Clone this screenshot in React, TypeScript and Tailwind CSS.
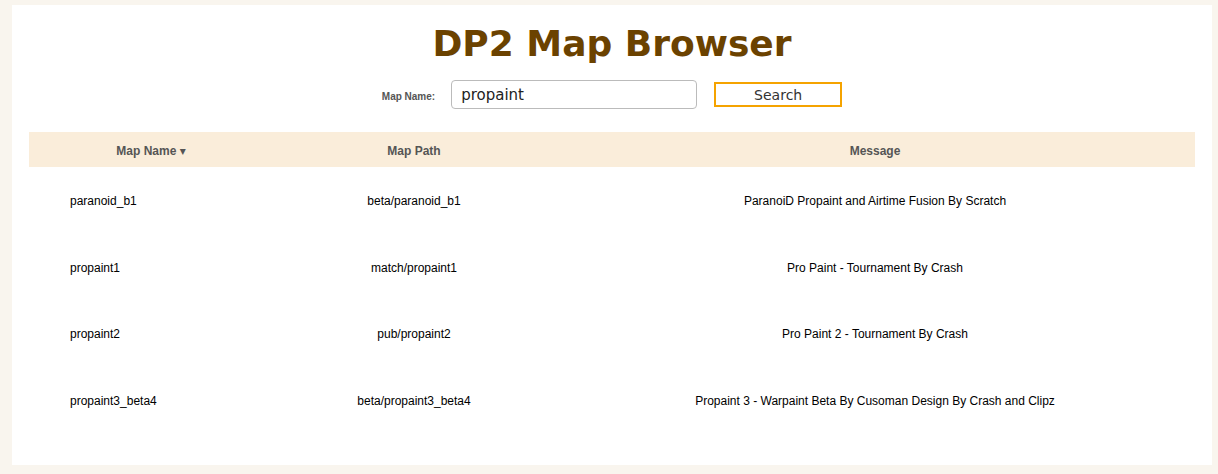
import React from "react";

const rows = [
  { name: "paranoid_b1", path: "beta/paranoid_b1", message: "ParanoiD Propaint and Airtime Fusion By Scratch" },
  { name: "propaint1", path: "match/propaint1", message: "Pro Paint - Tournament By Crash" },
  { name: "propaint2", path: "pub/propaint2", message: "Pro Paint 2 - Tournament By Crash" },
  { name: "propaint3_beta4", path: "beta/propaint3_beta4", message: "Propaint 3 - Warpaint Beta By Cusoman Design By Crash and Clipz" },
];

export default function App() {
  return (
    <div className="w-[1218px] h-[474px] bg-[#f9f5ee] pt-[5px] pl-[12px]">
      {/* main panel */}
      <div className="w-[1200px] h-[460px] bg-white flex flex-col items-center">
        <h1 className="mt-[17px] h-[44px] leading-[44px] text-[36px] font-bold text-[#6b4200] font-['DejaVu_Sans',sans-serif]">
          DP2 Map Browser
        </h1>

        {/* search form */}
        <div className="mt-[14px] flex items-center">
          <label className="text-[10px] font-bold text-[#555] font-['Liberation_Sans',Arial,sans-serif] mr-[16px] mt-[4px]">
            Map Name:
          </label>
          <input
            className="w-[246px] h-[29px] border border-[#bbb] rounded-[4px] px-[9px] text-[15px] text-[#222] font-['DejaVu_Sans',sans-serif] outline-none"
            defaultValue="propaint"
          />
          <button className="ml-[17px] w-[128px] h-[25px] border-2 border-[#f5a300] bg-white text-[14px] text-[#333] font-['DejaVu_Sans',sans-serif] leading-none">
            Search
          </button>
        </div>

        {/* results */}
        <table className="mt-[23px] w-[1166px] table-fixed border-collapse font-['Liberation_Sans',Arial,sans-serif] text-[12px]">
          <colgroup>
            <col className="w-[244px]" />
            <col className="w-[282px]" />
            <col />
          </colgroup>
          <thead>
            <tr className="bg-[#faedda] h-[35px] text-[#555] font-bold">
              <th className="font-bold pt-[2px]">
                Map Name <span className="text-[12px] font-['DejaVu_Sans',sans-serif]">▾</span>
              </th>
              <th className="font-bold pt-[2px]">Map Path</th>
              <th className="font-bold pt-[2px]">Message</th>
            </tr>
          </thead>
          <tbody className="text-black">
            {rows.map((r) => (
              <tr key={r.name} className="h-[66.5px]">
                <td className="pl-[41px] pt-[2px] text-left">{r.name}</td>
                <td className="pt-[2px] text-center">{r.path}</td>
                <td className="pt-[2px] text-center">{r.message}</td>
              </tr>
            ))}
          </tbody>
        </table>
      </div>
    </div>
  );
}
